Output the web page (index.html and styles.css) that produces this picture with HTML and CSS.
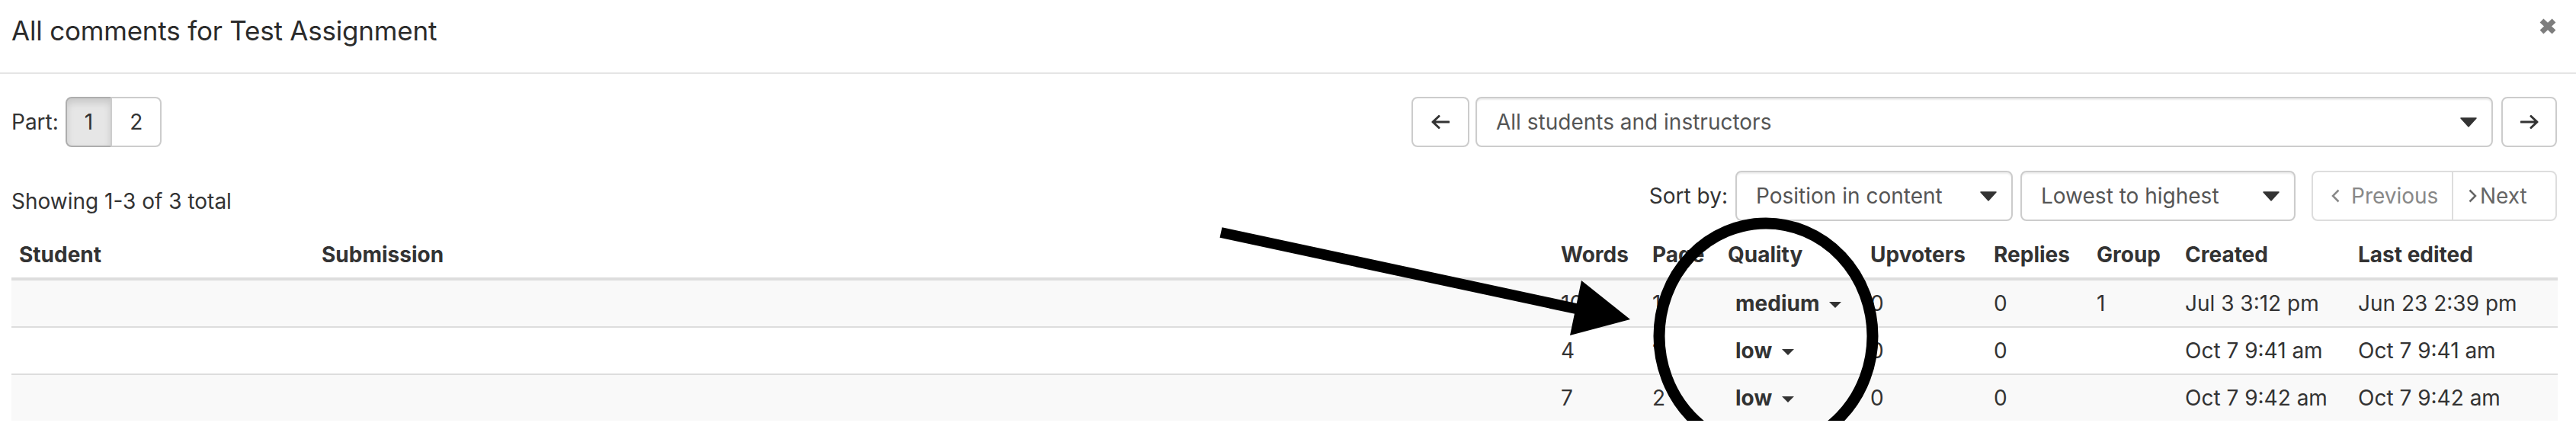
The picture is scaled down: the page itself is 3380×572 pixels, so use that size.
FILE: index.html
```html
<!DOCTYPE html>
<html lang="en">
<head>
	<meta charset="UTF-8">
	<title>All comments for Test Assignment</title>
	<link rel="stylesheet" href="styles.css">
</head>
<body>
	<!-- header -->
	<div class="modal-header">
		<h4 class="modal-title">All comments for Test Assignment</h4>
		<svg class="close" width="22" height="21" viewBox="0 0 22 21"><path d="M3 3 L19 18 M19 3 L3 18" stroke="#7d7d7d" stroke-width="7"/></svg>
	</div>
	<div class="modal-body">
		<!-- parts + student filter -->
		<div class="toolbar">
			<div class="parts">
				<span class="label">Part:</span>
				<div class="btn-group">
					<span class="btn active">1</span>
					<span class="btn">2</span>
				</div>
			</div>
			<div class="nav">
				<span class="btn icon-btn prev-student"><svg width="24" height="18" viewBox="0 0 24 18"><path d="M23 9 H2 M10 1.5 L2 9 L10 16.5" fill="none" stroke="#333" stroke-width="3" stroke-linecap="round" stroke-linejoin="round"/></svg></span>
				<div class="select wide">
					<span>All students and instructors</span>
					<svg class="caret" width="22" height="13" viewBox="0 0 22 13"><path d="M1 1 H21 L11 12 Z" fill="#333" stroke="#333" stroke-width="1.5" stroke-linejoin="round"/></svg>
				</div>
				<span class="btn icon-btn next-student"><svg width="24" height="18" viewBox="0 0 24 18"><path d="M1 9 H22 M14 1.5 L22 9 L14 16.5" fill="none" stroke="#333" stroke-width="3" stroke-linecap="round" stroke-linejoin="round"/></svg></span>
			</div>
		</div>
		<!-- count + sorting -->
		<div class="toolbar sortbar">
			<div class="count">Showing 1-3 of 3 total</div>
			<div class="sort">
				<span class="label">Sort by:</span>
				<div class="select sort-field">
					<span>Position in content</span>
					<svg class="caret" width="22" height="13" viewBox="0 0 22 13"><path d="M1 1 H21 L11 12 Z" fill="#333" stroke="#333" stroke-width="1.5" stroke-linejoin="round"/></svg>
				</div>
				<div class="select sort-order">
					<span>Lowest to highest</span>
					<svg class="caret" width="22" height="13" viewBox="0 0 22 13"><path d="M1 1 H21 L11 12 Z" fill="#333" stroke="#333" stroke-width="1.5" stroke-linejoin="round"/></svg>
				</div>
				<div class="pager">
					<span class="page-prev disabled"><svg width="11" height="18" viewBox="0 0 11 18"><path d="M9.5 1.5 L2 9 L9.5 16.5" fill="none" stroke="#888" stroke-width="2.5"/></svg>Previous</span>
					<span class="page-next"><svg width="11" height="18" viewBox="0 0 11 18"><path d="M1.5 1.5 L9 9 L1.5 16.5" fill="none" stroke="#666" stroke-width="2.5"/></svg>Next</span>
				</div>
			</div>
		</div>
		<!-- comments table -->
		<table class="comments">
			<colgroup>
				<col style="width:397px">
				<col style="width:1626px">
				<col style="width:120px">
				<col style="width:99px">
				<col style="width:187px">
				<col style="width:162px">
				<col style="width:135px">
				<col style="width:116px">
				<col style="width:227px">
				<col style="width:272px">
			</colgroup>
			<thead>
				<tr>
					<th>Student</th>
					<th>Submission</th>
					<th>Words</th>
					<th>Page</th>
					<th>Quality</th>
					<th>Upvoters</th>
					<th>Replies</th>
					<th>Group</th>
					<th>Created</th>
					<th>Last edited</th>
				</tr>
			</thead>
			<tbody>
				<tr>
					<td></td>
					<td></td>
					<td>10</td>
					<td>1</td>
					<td><span class="quality">medium<i class="tri"></i></span></td>
					<td>0</td>
					<td>0</td>
					<td>1</td>
					<td>Jul 3 3:12 pm</td>
					<td>Jun 23 2:39 pm</td>
				</tr>
				<tr>
					<td></td>
					<td></td>
					<td>4</td>
					<td>1</td>
					<td><span class="quality">low<i class="tri"></i></span></td>
					<td>0</td>
					<td>0</td>
					<td></td>
					<td>Oct 7 9:41 am</td>
					<td>Oct 7 9:41 am</td>
				</tr>
				<tr>
					<td></td>
					<td></td>
					<td>7</td>
					<td>2</td>
					<td><span class="quality">low<i class="tri"></i></span></td>
					<td>0</td>
					<td>0</td>
					<td></td>
					<td>Oct 7 9:42 am</td>
					<td>Oct 7 9:42 am</td>
				</tr>
			</tbody>
		</table>
	</div>
	<!-- annotation drawn over the screenshot -->
	<svg class="markup" width="3380" height="572" viewBox="0 0 3380 572">
		<line x1="1602" y1="305" x2="2082" y2="408" stroke="#000" stroke-width="14"/>
		<polygon points="2075,368 2139,419 2060,440" fill="#000"/>
		<ellipse cx="2317" cy="441" rx="140" ry="148" fill="none" stroke="#000" stroke-width="15"/>
	</svg>
</body>
</html>
```

FILE: styles.css
```css
*{
	margin:0;
	padding:0;
	box-sizing:border-box;
}
html,body{
	overflow:hidden;
}
body{
	font-family:Inter,"Liberation Sans",sans-serif;
	font-size:28px;
	line-height:40px;
	color:#333;
	background:#fff;
	position:relative;
}
/* header */
.modal-header{
	display:flex;
	justify-content:space-between;
	align-items:flex-start;
	padding:14px 26px 29px 15px;
	border-bottom:2px solid #e5e5e5;
}
.modal-title{
	font-size:35px;
	line-height:52px;
	font-weight:400;
	letter-spacing:-0.2px;
	color:#2b2b2b;
}
.close{
	margin-top:10px;
}
.modal-body{
	padding:0 25px 0 15px;
}
/* toolbars */
.toolbar{
	display:flex;
	justify-content:space-between;
	align-items:center;
	margin-top:30px;
}
.parts,.nav,.sort{
	display:flex;
	align-items:center;
}
.parts .label{
	margin-right:9px;
}
.btn-group{
	display:flex;
}
.btn{
	display:flex;
	align-items:center;
	justify-content:center;
	height:66px;
	padding:0 23px;
	border:2px solid #ccc;
	border-radius:8px;
	background:#fff;
	color:#333;
}
.btn-group .btn:first-child{
	border-top-right-radius:0;
	border-bottom-right-radius:0;
}
.btn-group .btn+.btn{
	margin-left:-2px;
	border-top-left-radius:0;
	border-bottom-left-radius:0;
}
.btn.active{
	background:#e6e6e6;
	border-color:#adadad;
	box-shadow:inset 0 6px 10px rgba(0,0,0,.125);
}
.icon-btn{
	padding:0;
}
.prev-student{
	width:76px;
}
.next-student{
	width:73px;
	margin-left:11px;
}
.select{
	display:flex;
	align-items:center;
	justify-content:space-between;
	height:66px;
	padding:0 19px 0 25px;
	border:2px solid #ccc;
	border-radius:8px;
	color:#555;
	box-shadow:inset 0 2px 2px rgba(0,0,0,.075);
}
.select.wide{
	width:1335px;
	margin-left:8px;
}
/* sort row */
.sortbar{
	align-items:flex-start;
	margin-top:31px;
}
.count{
	padding-top:20px;
}
.sort .label{
	margin-right:10px;
}
.sort-field{
	width:364px;
}
.sort-order{
	width:361px;
	margin-left:10px;
}
.pager{
	display:flex;
	height:66px;
	margin-left:21px;
	border:2px solid #ddd;
	border-radius:8px;
}
.pager span{
	display:flex;
	align-items:center;
	color:#666;
}
.page-prev{
	width:184px;
	padding-left:24px;
	border-right:2px solid #ddd;
}
.page-prev svg{
	margin-right:15px;
}
.page-prev.disabled{
	color:#888;
}
.page-next{
	width:134px;
	padding-left:20px;
}
.page-next svg{
	margin-right:4px;
}
/* table */
.comments{
	width:3341px;
	table-layout:fixed;
	border-collapse:collapse;
	margin-top:14px;
}
.comments th{
	text-align:left;
	font-weight:700;
	padding:10px;
	border-bottom:4px solid #ddd;
}
.comments td{
	padding:10px;
	border-top:2px solid #ddd;
	white-space:nowrap;
}
.comments tbody tr:nth-child(odd){
	background:#f9f9f9;
}
.quality{
	display:inline-flex;
	align-items:center;
	padding-left:10px;
	font-weight:700;
}
.tri{
	display:inline-block;
	margin-left:13px;
	margin-top:4px;
	border-top:8px solid #333;
	border-left:8px solid transparent;
	border-right:8px solid transparent;
}
/* annotation */
.markup{
	position:absolute;
	top:0;
	left:0;
	pointer-events:none;
}
```
